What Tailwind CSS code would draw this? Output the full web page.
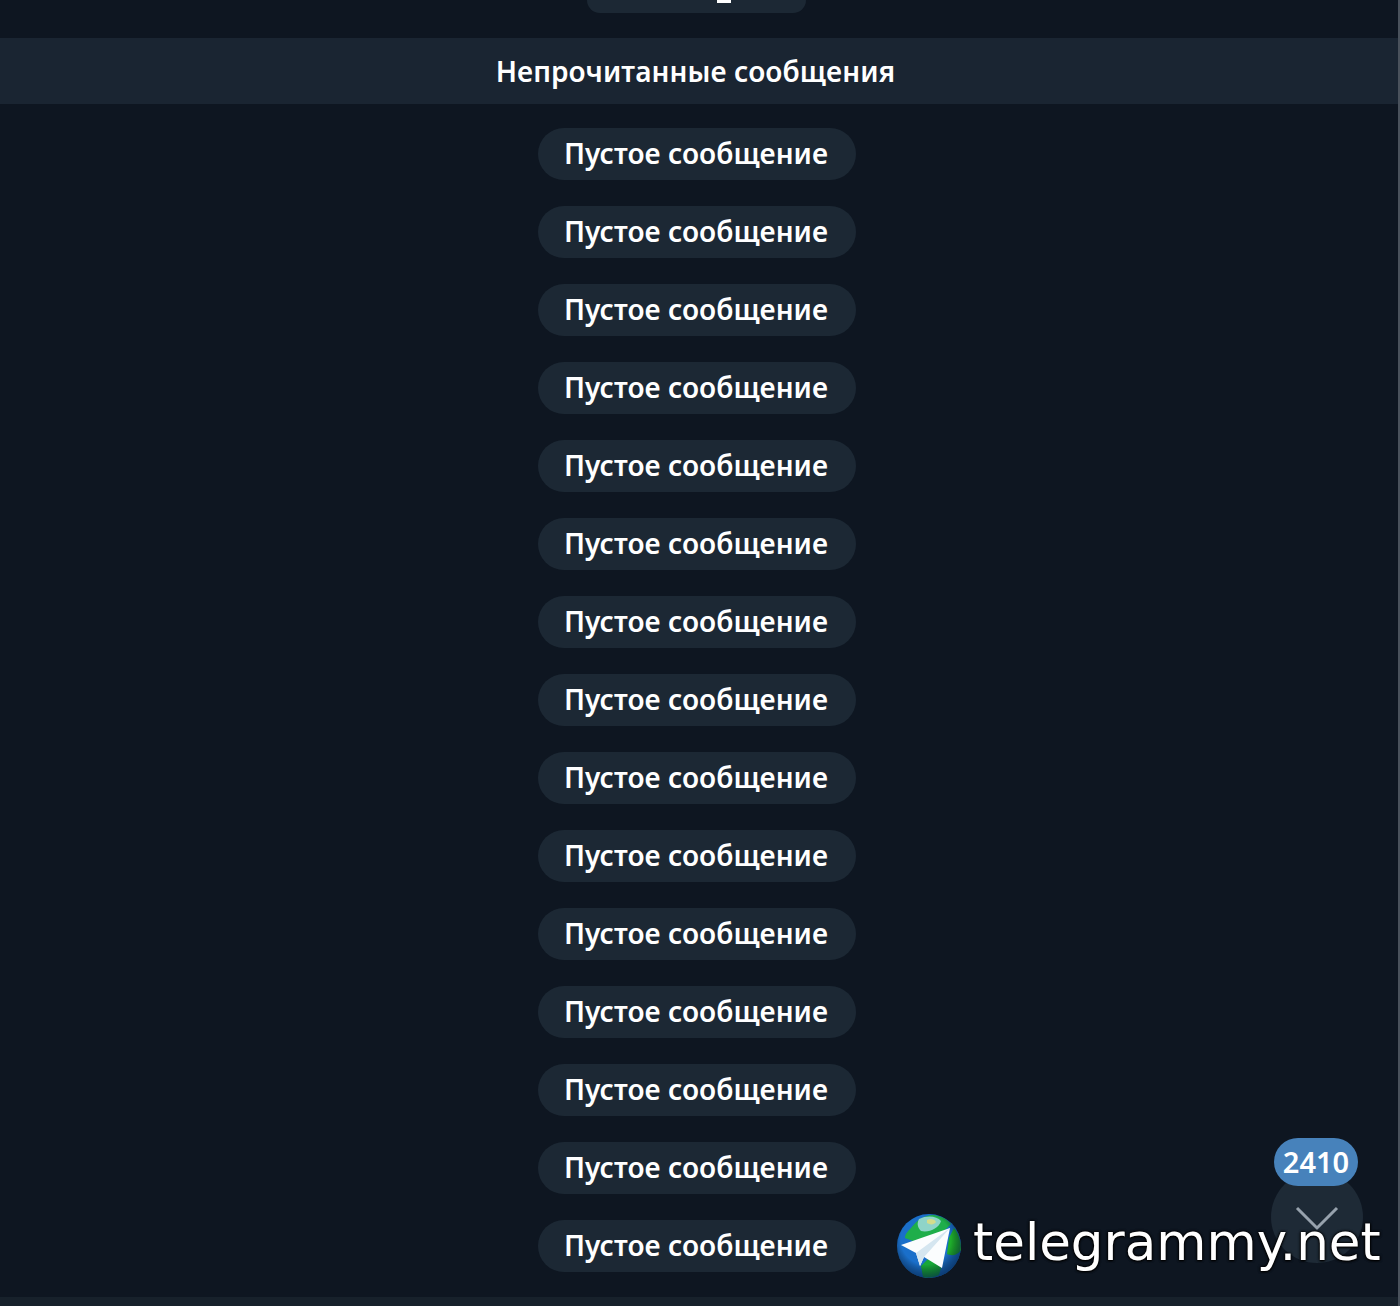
<!DOCTYPE html>
<html lang="ru">
<head>
  <meta charset="UTF-8">
  <title>Непрочитанные сообщения</title>
  <script src="https://cdn.jsdelivr.net/npm/@tailwindcss/browser@4"></script>
</head>
<body class="bg-[#0e1621] h-[1306px] overflow-hidden font-['Noto_Sans',sans-serif] text-white">
  <div class="relative h-[1306px] flex flex-col">
    <!-- previous pill, cut off by the top edge -->
    <div class="h-[38px] shrink-0 flex justify-center items-start">
      <div class="w-[219px] h-[13px] ml-[-7px] bg-[#1c2834] rounded-b-[26px] overflow-hidden flex justify-center">
        <div class="w-[14px] h-[3px] bg-white ml-[55px]"></div>
      </div>
    </div>

    <div class="h-[66px] shrink-0 bg-[#1a2532] flex items-center justify-center text-[28px] tracking-[0.09px] font-semibold leading-none pr-[9px] pb-[1px]">Непрочитанные сообщения</div>

    <!-- empty messages -->
    <div class="flex flex-col items-center gap-[26px] pt-[24px] pr-[6px] grow">
      <div class="h-[52px] w-[318px] pb-[2px] pr-[2px] rounded-[26px] bg-[#1c2834] flex items-center justify-center text-[28px] tracking-[0.03px] font-semibold leading-none">Пустое сообщение</div>
      <div class="h-[52px] w-[318px] pb-[2px] pr-[2px] rounded-[26px] bg-[#1c2834] flex items-center justify-center text-[28px] tracking-[0.03px] font-semibold leading-none">Пустое сообщение</div>
      <div class="h-[52px] w-[318px] pb-[2px] pr-[2px] rounded-[26px] bg-[#1c2834] flex items-center justify-center text-[28px] tracking-[0.03px] font-semibold leading-none">Пустое сообщение</div>
      <div class="h-[52px] w-[318px] pb-[2px] pr-[2px] rounded-[26px] bg-[#1c2834] flex items-center justify-center text-[28px] tracking-[0.03px] font-semibold leading-none">Пустое сообщение</div>
      <div class="h-[52px] w-[318px] pb-[2px] pr-[2px] rounded-[26px] bg-[#1c2834] flex items-center justify-center text-[28px] tracking-[0.03px] font-semibold leading-none">Пустое сообщение</div>
      <div class="h-[52px] w-[318px] pb-[2px] pr-[2px] rounded-[26px] bg-[#1c2834] flex items-center justify-center text-[28px] tracking-[0.03px] font-semibold leading-none">Пустое сообщение</div>
      <div class="h-[52px] w-[318px] pb-[2px] pr-[2px] rounded-[26px] bg-[#1c2834] flex items-center justify-center text-[28px] tracking-[0.03px] font-semibold leading-none">Пустое сообщение</div>
      <div class="h-[52px] w-[318px] pb-[2px] pr-[2px] rounded-[26px] bg-[#1c2834] flex items-center justify-center text-[28px] tracking-[0.03px] font-semibold leading-none">Пустое сообщение</div>
      <div class="h-[52px] w-[318px] pb-[2px] pr-[2px] rounded-[26px] bg-[#1c2834] flex items-center justify-center text-[28px] tracking-[0.03px] font-semibold leading-none">Пустое сообщение</div>
      <div class="h-[52px] w-[318px] pb-[2px] pr-[2px] rounded-[26px] bg-[#1c2834] flex items-center justify-center text-[28px] tracking-[0.03px] font-semibold leading-none">Пустое сообщение</div>
      <div class="h-[52px] w-[318px] pb-[2px] pr-[2px] rounded-[26px] bg-[#1c2834] flex items-center justify-center text-[28px] tracking-[0.03px] font-semibold leading-none">Пустое сообщение</div>
      <div class="h-[52px] w-[318px] pb-[2px] pr-[2px] rounded-[26px] bg-[#1c2834] flex items-center justify-center text-[28px] tracking-[0.03px] font-semibold leading-none">Пустое сообщение</div>
      <div class="h-[52px] w-[318px] pb-[2px] pr-[2px] rounded-[26px] bg-[#1c2834] flex items-center justify-center text-[28px] tracking-[0.03px] font-semibold leading-none">Пустое сообщение</div>
      <div class="h-[52px] w-[318px] pb-[2px] pr-[2px] rounded-[26px] bg-[#1c2834] flex items-center justify-center text-[28px] tracking-[0.03px] font-semibold leading-none">Пустое сообщение</div>
      <div class="h-[52px] w-[318px] pb-[2px] pr-[2px] rounded-[26px] bg-[#1c2834] flex items-center justify-center text-[28px] tracking-[0.03px] font-semibold leading-none">Пустое сообщение</div>
    </div>

    <!-- bottom bar -->
    <div class="h-[9px] shrink-0 bg-[#17212b]"></div>

    <!-- scrollbar edge -->
    <div class="absolute top-0 right-0 bottom-0 w-[2px] bg-[#4a525c]"></div>

    <!-- scroll to bottom button -->
    <div class="absolute left-[1271px] top-[1171px] w-[92px] h-[92px] rounded-full bg-[#1e2a36] flex items-center justify-center">
      <svg width="44" height="26" viewBox="0 0 44 26" fill="none" class="mt-[1px]">
        <path d="M2 3 L22 23 L42 3" stroke="#97a2ad" stroke-width="3"/>
      </svg>
    </div>
    <div class="absolute left-[1274px] top-[1138px] w-[84px] h-[48px] pb-[1px] rounded-full bg-[#4782bb] flex items-center justify-center text-[29px] font-semibold leading-none">2410</div>

    <!-- watermark -->
    <svg class="absolute left-[897px] top-[1214px] blur-[0.6px]" width="64" height="64" viewBox="0 0 64 64">
      <defs>
        <radialGradient id="shade" cx="45%" cy="40%" r="60%">
          <stop offset="65%" stop-color="#000" stop-opacity="0"/>
          <stop offset="100%" stop-color="#04224a" stop-opacity="0.65"/>
        </radialGradient>
      </defs>
      <circle cx="32" cy="32" r="32" fill="#1a6fca"/>
      <path d="M14 14 C20 6 28 1 36 1 C44 2 50 5 54 10 L40 24 L16 27 L8 24 C8 20 11 17 14 14 Z" fill="#1fae4a"/>
      <path d="M22 5 C30 1 40 2 44 7 C42 14 32 19 24 17 C20 13 20 9 22 5 Z" fill="#8fd4c8"/>
      <path d="M30 6 C33 4 38 5 39 8 C37 11 33 11 30 9 Z" fill="#d3dd8c"/>
      <path d="M52 24 L57 14 C62 20 64 28 64 36 C60 42 54 42 50 40 Z" fill="#1ead2c"/>
      <path d="M24 52 L34 42 L44 54 L42 61 C36 64 30 64 26 63 Z" fill="#18a838"/>
      <circle cx="32" cy="32" r="32" fill="url(#shade)"/>
      <path d="M53 14 L45 54 L27 43 L23 52 L19 39 L4 31 Z" fill="#fbfdfe"/>
      <path d="M53 14 L19 39 L23 52 L27 43 Z" fill="#d5e6f0"/>
    </svg>
    <div class="absolute left-[973px] top-[1212px] font-['DejaVu_Sans',sans-serif] text-[51.5px] leading-[60px] whitespace-nowrap [text-shadow:0_0_3px_#000,0_0_3px_#000,0_1px_2px_#000]">telegrammy.net</div>
  </div>
</body>
</html>
